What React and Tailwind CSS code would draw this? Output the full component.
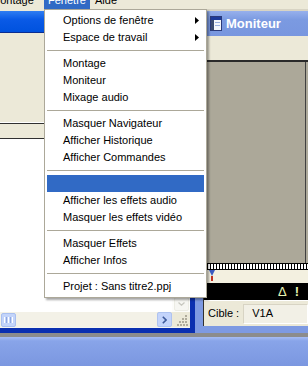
import React from "react";

const Arrow = () => (
  <svg width="4" height="7" viewBox="0 0 4 7">
    <path d="M0 0L4 3.5L0 7Z" fill="#000" />
  </svg>
);

function Item({ label, arrow, active }) {
  return (
    <div
      className={
        active
          ? "h-[17px] flex items-center justify-between pl-[16px] pr-[5px] bg-[#316AC5] text-white"
          : "h-[17px] flex items-center justify-between pl-[16px] pr-[5px] text-black"
      }
    >
      <span className="whitespace-nowrap">{label}</span>
      {arrow ? <Arrow /> : null}
    </div>
  );
}

const Sep = () => (
  <div className="h-[9px] flex items-center">
    <div className="h-px w-full bg-[#ACA899]" />
  </div>
);

const MonIcon = () => (
  <svg width="12" height="15" viewBox="0 0 12 15">
    <rect x="0.5" y="0.5" width="11" height="14" fill="#F4F6FC" stroke="#2A3A7A" />
    <rect x="1" y="1" width="10" height="3" fill="#1C3A9A" />
    <rect x="1" y="4" width="3" height="10" fill="#3A4A70" />
    <rect x="5" y="6" width="5" height="1" fill="#9AB0E0" />
    <rect x="5" y="9" width="5" height="1" fill="#9AB0E0" />
  </svg>
);

export default function App() {
  return (
    <div className="w-[308px] h-[366px] relative overflow-hidden bg-[#ECE9D8] font-['Liberation_Sans',Arial,sans-serif] text-[11px] text-black">
      {/* menubar */}
      <div className="h-[9px] overflow-hidden flex bg-[#ECE9D8]">
        <div className="h-[18px] -mt-[9px] leading-[18px] flex">
          <span className="w-[53px] -ml-[9px] whitespace-nowrap">Montage</span>
          <span className="w-[46px] pl-[4px] bg-[#316AC5] text-white whitespace-nowrap">Fenêtre</span>
          <span className="pl-[5px] whitespace-nowrap">Aide</span>
        </div>
      </div>

      {/* windows row */}
      <div className="h-[324px] flex">
        {/* left window */}
        <div className="w-[195px] flex flex-col">
          <div className="h-[2px] bg-[#ECE9D8]" />
          <div className="h-[22px] bg-[linear-gradient(#2F7DF2,#0A5AE6_40%,#0052DE)] border-b border-[#0A2C90]" />
          <div className="flex-1 flex">
            <div className="w-[190px] flex flex-col">
              <div className="h-[89px] bg-[#ECE9D8]" />
              <div className="h-px bg-[#FFFFFF]" />
              <div className="h-px bg-[#303030]" />
              <div className="h-[14px] bg-[#ECE9D8]" />
              <div className="h-px bg-[#303030]" />
              <div className="flex-1 flex">
                <div className="flex-1 bg-white" />
                <div className="w-[18px] bg-[#FCFCFA] flex flex-col justify-end pl-[2px] pr-[1px] pb-[1px]">
                  <div className="h-[14px] rounded-[2px] bg-[#F6F6F2] border border-[#ECECE4] flex items-center justify-center">
                    <svg width="7" height="4" viewBox="0 0 7 4">
                      <path d="M0.5 0.5L3.5 3.2L6.5 0.5" fill="none" stroke="#C8C8C0" strokeWidth="1.3" />
                    </svg>
                  </div>
                </div>
              </div>
              <div className="h-[15px] flex">
                <div className="flex-1 bg-[#F3F1E7] flex items-center pl-[1px]">
                  <div className="w-[15px] h-[14px] rounded-[2px] bg-[#C3D4FA] border border-[#A9BFEF] flex items-center justify-center gap-[1px]">
                    <div className="w-px h-[6px] bg-white" />
                    <div className="w-px h-[6px] bg-[#8EA7E0]" />
                    <div className="w-px h-[6px] bg-white" />
                    <div className="w-px h-[6px] bg-[#8EA7E0]" />
                    <div className="w-px h-[6px] bg-white" />
                  </div>
                </div>
                <div className="w-[15px] h-[15px] rounded-[2px] bg-[#C4D4FB] border border-[#AFC3F0] flex items-center justify-center">
                  <svg width="5" height="8" viewBox="0 0 5 8">
                    <path d="M0.8 0.8L4 4L0.8 7.2" fill="none" stroke="#3E5A9A" strokeWidth="1.6" />
                  </svg>
                </div>
                <div className="w-[18px] bg-[#ECE9D8] flex items-end justify-end pr-[2px] pb-[1px]">
                  <svg width="11" height="11" viewBox="0 0 11 11">
                    <g fill="#B0AC9C">
                      <rect x="8" y="0" width="2" height="2" />
                      <rect x="5" y="3" width="2" height="2" />
                      <rect x="8" y="3" width="2" height="2" />
                      <rect x="2" y="6" width="2" height="2" />
                      <rect x="5" y="6" width="2" height="2" />
                      <rect x="8" y="6" width="2" height="2" />
                      <rect x="0" y="9" width="2" height="2" />
                      <rect x="3" y="9" width="2" height="2" />
                      <rect x="6" y="9" width="2" height="2" />
                      <rect x="9" y="9" width="2" height="2" />
                    </g>
                  </svg>
                </div>
              </div>
              <div className="h-px bg-[#F4F4F0]" />
            </div>
            <div className="w-[5px] bg-[#0A2FB0]" />
          </div>
          <div className="h-[5px] bg-[#0A2FB0]" />
        </div>

        {/* right window */}
        <div className="flex-1 flex flex-col">
          <div className="h-[2px] bg-[#D8D4C4]" />
          <div className="h-[25px] bg-[linear-gradient(#97B0EC,#7B9AE1_35%,#7896DF)] flex items-center pl-[15px] gap-[4px]">
            <MonIcon />
            <span className="text-white font-bold text-[13px] whitespace-nowrap">Moniteur</span>
          </div>
          <div className="flex-1 flex">
            <div className="w-[8px] bg-[#7E9AE2]" />
            <div className="flex-1 flex flex-col border-l border-[#303030]">
              <div className="h-[24px] bg-[#ECE9D8]" />
              <div className="h-[2px] bg-[#2A2A2A]" />
              <div className="h-[201px] flex">
                <div className="flex-1 bg-[#ACA899]" />
                <div className="w-px bg-[#404040]" />
                <div className="w-[2px] bg-[#ACA899]" />
              </div>
              <div className="h-[7px] border-y border-black bg-[repeating-linear-gradient(90deg,#000_0_1px,#fff_1px_3px)]" />
              <div className="h-[12px] bg-[#F3F0E0] flex items-start pl-[5px]">
                <svg width="6" height="11" viewBox="0 0 6 11">
                  <path d="M0 0H6L3 6Z" fill="#3A5AC0" />
                  <rect x="2" y="6" width="2" height="5" fill="#C03020" />
                </svg>
              </div>
              <div className="h-[1px] bg-[#F3F0E0]" />
              <div className="h-[17px] bg-black flex items-center justify-end pr-[9px] gap-[8px] text-[#E6F3B3] text-[13px] leading-none">
                <span>Δ</span>
                <span className="font-bold">!</span>
              </div>
              <div className="h-[26px] bg-[#ECE9D8] border-t border-white flex items-center pl-[4px] gap-[4px]">
                <span className="whitespace-nowrap">Cible :</span>
                <div className="flex-1 h-[20px] bg-[#F2F0E6] border border-[#FFFFFF] border-t-[#D8D4C4] border-l-[#D8D4C4] flex items-center pl-[8px]">
                  V1A
                </div>
              </div>
            </div>
          </div>
          <div className="h-[7px] bg-[#7E9AE2]" />
        </div>
      </div>

      {/* bottom */}
      <div className="h-[4px] bg-[#8C8C8C]" />
      <div className="h-[29px] bg-[linear-gradient(#A6BCF4,#88A4E9_4px,#7B97E0)]" />

      {/* dropdown menu */}
      <div className="absolute left-[44px] top-[9px] w-[163px] bg-white border border-[#ACA899] p-[2px] shadow-[2px_2px_2px_rgba(0,0,0,0.35)]">
        <Item label="Options de fenêtre" arrow />
        <Item label="Espace de travail" arrow />
        <Sep />
        <Item label="Montage" />
        <Item label="Moniteur" />
        <Item label="Mixage audio" />
        <Sep />
        <Item label="Masquer Navigateur" />
        <Item label="Afficher Historique" />
        <Item label="Afficher Commandes" />
        <Sep />
        <Item label="" active />
        <Item label="Afficher les effets audio" />
        <Item label="Masquer les effets vidéo" />
        <Sep />
        <Item label="Masquer Effets" />
        <Item label="Afficher Infos" />
        <Sep />
        <Item label="Projet : Sans titre2.ppj" />
      </div>
    </div>
  );
}
